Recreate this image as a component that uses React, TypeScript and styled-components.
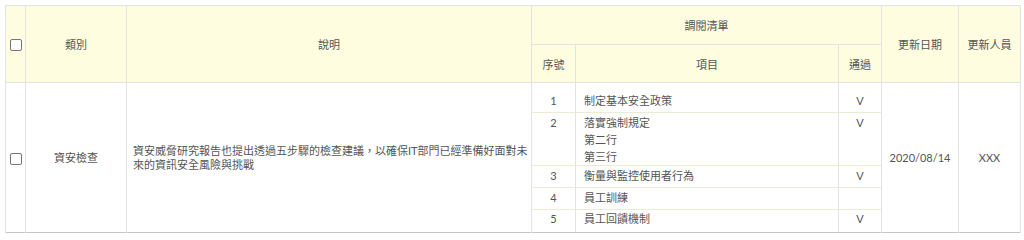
import styled, { createGlobalStyle } from 'styled-components'

const GlobalStyle = createGlobalStyle`
body {
  margin: 0;
  background: #ffffff;
  font-family: Lato, "Noto Sans CJK TC", sans-serif;
}
`

const Page = styled.div`
padding: 5px 0 0 5px;
`

const Table = styled.table`
width: 1015px;
table-layout: fixed;
border-collapse: collapse;
font-size: 11px;
color: #555555;
border: 1px solid #e3e3e3;
border-bottom: 1px solid #c4c4c4;
`

const Head = styled.thead`
background: #fffde0;
`

const Th = styled.th`
font-weight: 400;
text-align: center;
vertical-align: middle;
border: 1px solid #e3e3e3;
padding: 0;
`

const Row = styled.tr<{ h: number }>`
height: ${p => p.h}px;
`

const Td = styled.td`
text-align: center;
vertical-align: middle;
border-left: 1px solid #e3e3e3;
border-right: 1px solid #e3e3e3;
padding: 0;
line-height: 14px;
`

const DescTd = styled(Td)`
text-align: left;
padding: 0 0 0 6px;
`

const SubTd = styled.td<{ left?: boolean; last?: boolean; top: number }>`
text-align: ${p => (p.left ? 'left' : 'center')};
vertical-align: top;
padding: ${p => p.top}px ${p => (p.left ? '8px' : '0')} 0;
line-height: 17px;
border-left: 1px solid #e3e3e3;
border-right: 1px solid #e3e3e3;
border-bottom: 1px solid ${p => (p.last ? '#c4c4c4' : '#ecebd6')};
`

const Line = styled.div`
line-height: 17px;
`

const Check = styled.span`
display: inline-block;
width: 10px;
height: 10px;
border: 1px solid #767676;
border-radius: 2px;
background: #ffffff;
vertical-align: middle;
`

const items = [
  { no: 1, lines: ['制定基本安全政策'], pass: true, h: 30, top: 9 },
  { no: 2, lines: ['落實強制規定', '第二行', '第三行'], pass: true, h: 53, top: 1 },
  { no: 3, lines: ['衡量與監控使用者行為'], pass: true, h: 22, top: 1 },
  { no: 4, lines: ['員工訓練'], pass: false, h: 22, top: 1 },
  { no: 5, lines: ['員工回饋機制'], pass: true, h: 23, top: 0 },
]

const App = () => {
  return (
    <Page>
      <GlobalStyle />
      <Table>
        <colgroup>
          <col style={{ width: 20 }} />
          <col style={{ width: 101 }} />
          <col style={{ width: 405 }} />
          <col style={{ width: 44 }} />
          <col style={{ width: 263 }} />
          <col style={{ width: 43 }} />
          <col style={{ width: 77 }} />
          <col style={{ width: 62 }} />
        </colgroup>
        <Head>
          <Row h={39}>
            <Th rowSpan={2}><Check /></Th>
            <Th rowSpan={2}>類別</Th>
            <Th rowSpan={2}>說明</Th>
            <Th colSpan={3}>調閱清單</Th>
            <Th rowSpan={2}>更新日期</Th>
            <Th rowSpan={2}>更新人員</Th>
          </Row>
          <Row h={38}>
            <Th>序號</Th>
            <Th>項目</Th>
            <Th>通過</Th>
          </Row>
        </Head>
        <tbody>
          {items.map((it, i) => (
            <Row h={it.h} key={it.no}>
              {i === 0 && (
                <>
                  <Td rowSpan={5}><Check /></Td>
                  <Td rowSpan={5}>資安檢查</Td>
                  <DescTd rowSpan={5}>
                    資安威脅研究報告也提出透過五步驟的檢查建議，以確保IT部門已經準備好面對未來的資訊安全風險與挑戰
                  </DescTd>
                </>
              )}
              <SubTd top={it.top} last={i === 4}>{it.no}</SubTd>
              <SubTd top={it.top} left last={i === 4}>
                {it.lines.map(l => <Line key={l}>{l}</Line>)}
              </SubTd>
              <SubTd top={it.top} last={i === 4}>{it.pass ? 'V' : ''}</SubTd>
              {i === 0 && (
                <>
                  <Td rowSpan={5}>2020/08/14</Td>
                  <Td rowSpan={5}>XXX</Td>
                </>
              )}
            </Row>
          ))}
        </tbody>
      </Table>
    </Page>
  )
}

export default App
